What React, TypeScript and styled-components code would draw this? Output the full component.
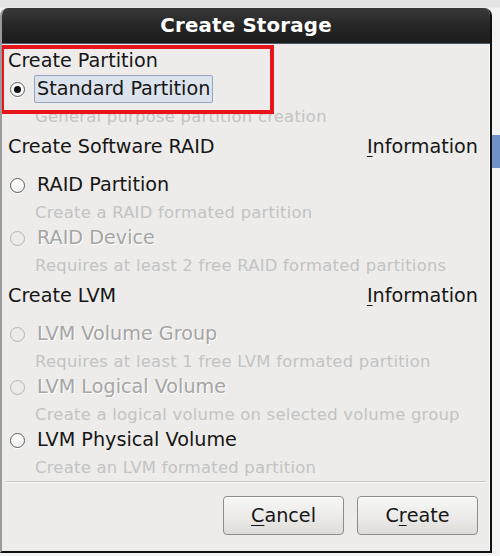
import React from "react";
import styled, { createGlobalStyle } from "styled-components";

const Global = createGlobalStyle`
  html, body { margin: 0; padding: 0; }
  body {
    width: 500px;
    height: 556px;
    overflow: hidden;
    background: #f2f2f2;
    font-family: "DejaVu Sans", "Liberation Sans", sans-serif;
  }
`;

const Page = styled.div`
  display: flex;
  align-items: flex-start;
  width: 500px;
  height: 556px;
  background: linear-gradient(#e4e4e4 0, #e4e4e4 7px, #f3f3f3 8px);
`;

const Dialog = styled.div`
  position: relative;
  margin-top: 8px;
  width: 492px;
  height: 545px;
  box-sizing: border-box;
  display: flex;
  flex-direction: column;
  background: #edecea;
  border-right: 2px solid #111;
  border-bottom: 2px solid #111;
  border-left: 2px solid #9a9a9a;
  border-radius: 8px 8px 0 0;
  overflow: hidden;
`;

const TitleBar = styled.div`
  height: 35px;
  display: flex;
  align-items: center;
  justify-content: center;
  background: linear-gradient(#3a3a3a, #262626 50%, #1c1c1c);
  border-bottom: 1px solid #4d5d6e;
  color: #fff;
  font-weight: bold;
  font-size: 19.8px;
  letter-spacing: 0.2px;
`;

const Body = styled.div`
  flex: 1;
  display: flex;
  flex-direction: column;
  padding: 4px 11px 0 6px;
  border-right: 1px solid #fafafa;
`;

const Heading = styled.div<{ $gap: number }>`
  display: flex;
  justify-content: space-between;
  height: 26px;
  line-height: 26px;
  font-size: 19.2px;
  color: #161616;
  margin-top: ${(p) => p.$gap}px;
  margin-bottom: ${(p) => (p.$gap > 0 ? 11 : 1)}px;
`;

const Mnemonic = styled.span`
  text-decoration: underline;
  text-underline-offset: 3px;
  text-decoration-thickness: 1px;
`;

const Row = styled.div`
  display: flex;
  align-items: center;
  height: 28px;
  padding-left: 2px;
`;

const RadioCircle = styled.span<{ $disabled?: boolean; $checked?: boolean }>`
  width: 15px;
  height: 15px;
  box-sizing: border-box;
  border-radius: 50%;
  border: 1px solid ${(p) => (p.$disabled ? "#b4b4b4" : "#5e5e5e")};
  background: ${(p) =>
    p.$disabled ? "#ecebe9" : "linear-gradient(#ffffff, #f0f0f0)"};
  display: flex;
  align-items: center;
  justify-content: center;
  margin-right: 9px;
  flex: none;
  box-shadow: ${(p) => (p.$disabled ? "none" : "0 1px 0 #fff")};
  &::after {
    content: "";
    display: ${(p) => (p.$checked ? "block" : "none")};
    width: 7px;
    height: 7px;
    border-radius: 50%;
    background: #111;
  }
`;

const Label = styled.span<{ $disabled?: boolean; $focused?: boolean }>`
  font-size: 19.2px;
  line-height: 26px;
  color: ${(p) => (p.$disabled ? "#a5a5a5" : "#161616")};
  text-shadow: ${(p) => (p.$disabled ? "1px 1px 0 #ffffff" : "none")};
  padding: 0 2px;
  border-radius: 2px;
  border: 1px solid ${(p) => (p.$focused ? "#93a5c2" : "transparent")};
  background: ${(p) => (p.$focused ? "#dde3ec" : "transparent")};
`;

const Desc = styled.div`
  height: 22px;
  line-height: 22px;
  margin-top: 3px;
  padding-left: 27px;
  font-size: 16.4px;
  letter-spacing: 0.25px;
  color: #c3c3c3;
  white-space: nowrap;
`;

const Separator = styled.div`
  margin: 2px -8px 0 -2px;
  height: 1px;
  background: #c8c6c3;
  border-bottom: 1px solid #fbfbfb;
`;

const Buttons = styled.div`
  display: flex;
  justify-content: flex-end;
  gap: 13px;
  margin-top: 13px;
`;

const Button = styled.div`
  width: 121px;
  height: 39px;
  box-sizing: border-box;
  border: 1px solid #8c8c8c;
  border-radius: 4px;
  background: linear-gradient(#f7f7f6, #eae9e7 60%, #dedcd9);
  display: flex;
  align-items: center;
  justify-content: center;
  font-size: 19.2px;
  color: #161616;
  box-shadow: inset 0 1px 0 #fff;
`;

const Highlight = styled.div`
  position: absolute;
  left: -2px;
  top: 37px;
  width: 274px;
  height: 69px;
  box-sizing: border-box;
  border: 4px solid #e8141c;
  pointer-events: none;
`;

const SideStrip = styled.div`
  flex: 1;
  display: flex;
  flex-direction: column;
  padding-top: 135px;
`;

const BlueBar = styled.div`
  height: 33px;
  background: #6f93c9;
`;

type Opt = {
  label: string;
  desc: string;
  disabled?: boolean;
  checked?: boolean;
  focused?: boolean;
};

const Option: React.FC<Opt> = ({ label, desc, disabled, checked, focused }) => (
  <>
    <Row>
      <RadioCircle $disabled={disabled} $checked={checked} />
      <Label $disabled={disabled} $focused={focused}>
        {label}
      </Label>
    </Row>
    <Desc>{desc}</Desc>
  </>
);

const Info = () => (
  <span>
    <Mnemonic>I</Mnemonic>nformation
  </span>
);

export default function App() {
  return (
    <Page>
      <Global />
      <Dialog>
        <TitleBar>Create Storage</TitleBar>
        <Body>
          <Heading $gap={0}>
            <span>Create Partition</span>
          </Heading>
          <Option
            label="Standard Partition"
            desc="General purpose partition creation"
            checked
            focused
          />
          <Heading $gap={6}>
            <span>Create Software RAID</span>
            <Info />
          </Heading>
          <Option label="RAID Partition" desc="Create a RAID formated partition" />
          <Option
            label="RAID Device"
            desc="Requires at least 2 free RAID formated partitions"
            disabled
          />
          <Heading $gap={6}>
            <span>Create LVM</span>
            <Info />
          </Heading>
          <Option
            label="LVM Volume Group"
            desc="Requires at least 1 free LVM formated partition"
            disabled
          />
          <Option
            label="LVM Logical Volume"
            desc="Create a logical volume on selected volume group"
            disabled
          />
          <Option
            label="LVM Physical Volume"
            desc="Create an LVM formated partition"
          />
          <Separator />
          <Buttons>
            <Button>
              <Mnemonic>C</Mnemonic>ancel
            </Button>
            <Button>
              C<Mnemonic>r</Mnemonic>eate
            </Button>
          </Buttons>
        </Body>
        <Highlight />
      </Dialog>
      <SideStrip>
        <BlueBar />
      </SideStrip>
    </Page>
  );
}
